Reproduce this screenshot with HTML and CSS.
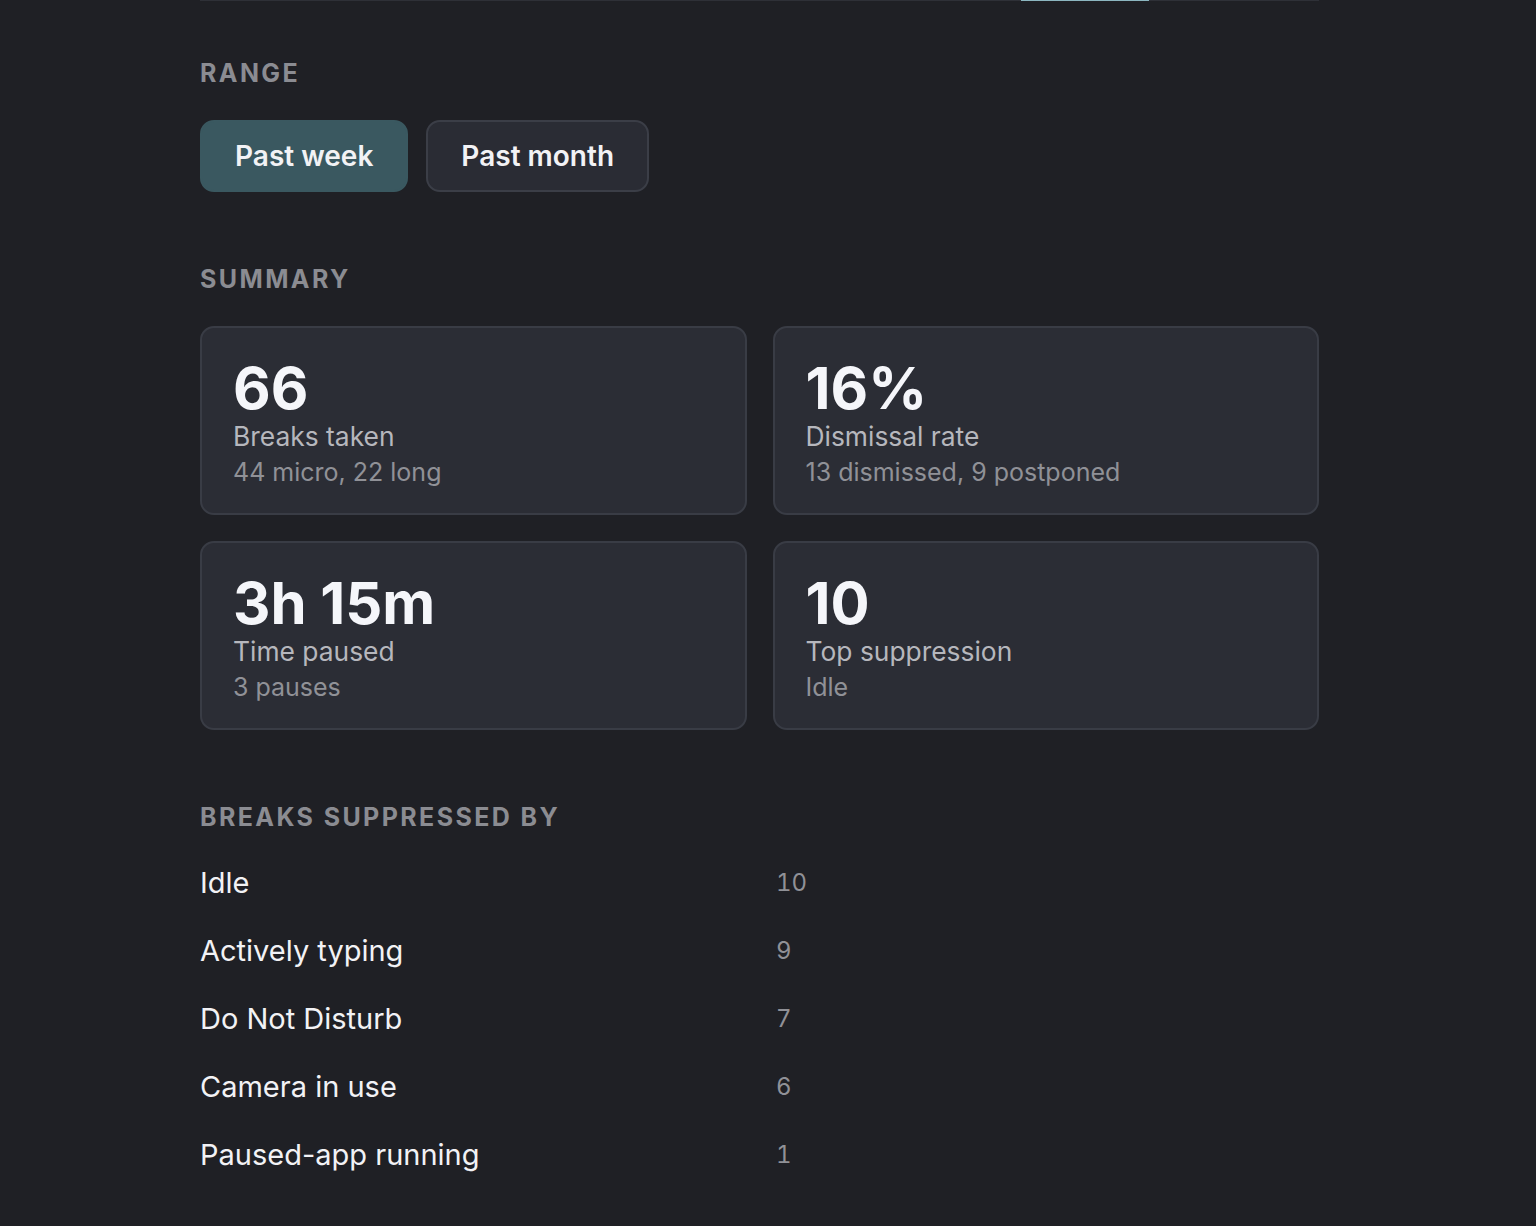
FILE: index.html
```html
<!DOCTYPE html>
<html lang="en">
<head>
<meta charset="utf-8">
<title>Stats</title>
<link rel="stylesheet" href="styles.css">
</head>
<body>
<div class="page">
  <div class="tabline"><div class="tab-spacer"></div><div class="tab-indicator"></div></div>

  <section class="section range">
    <h2 class="label">Range</h2>
    <div class="seg">
      <button class="btn active">Past week</button>
      <button class="btn">Past month</button>
    </div>
  </section>

  <section class="section summary">
    <h2 class="label">Summary</h2>
    <div class="cards">
      <div class="card">
        <div class="big">66</div>
        <div class="title">Breaks taken</div>
        <div class="sub">44 micro, 22 long</div>
      </div>
      <div class="card">
        <div class="big">16%</div>
        <div class="title">Dismissal rate</div>
        <div class="sub">13 dismissed, 9 postponed</div>
      </div>
      <div class="card">
        <div class="big">3h 15m</div>
        <div class="title">Time paused</div>
        <div class="sub">3 pauses</div>
      </div>
      <div class="card">
        <div class="big">10</div>
        <div class="title">Top suppression</div>
        <div class="sub">Idle</div>
      </div>
    </div>
  </section>

  <section class="section suppressed">
    <h2 class="label">Breaks suppressed by</h2>
    <div class="list">
      <div class="row"><span class="name">Idle</span><span class="count">10</span></div>
      <div class="row"><span class="name">Actively typing</span><span class="count">9</span></div>
      <div class="row"><span class="name">Do Not Disturb</span><span class="count">7</span></div>
      <div class="row"><span class="name">Camera in use</span><span class="count">6</span></div>
      <div class="row"><span class="name">Paused-app running</span><span class="count">1</span></div>
    </div>
  </section>
</div>
</body>
</html>
```

FILE: styles.css
```css
* { box-sizing: border-box; }
html, body {
  margin: 0;
  padding: 0;
  background: #1f2025;
}
body {
  font-family: Inter, "Noto Sans", "Liberation Sans", sans-serif;
  color: #f2f2f5;
}
.page {
  margin-left: 200px;
  width: 1119px;
}
.tabline {
  display: flex;
  height: 1px;
  background: #2e3037;
}
.tab-spacer { width: 821px; }
.tab-indicator {
  width: 128px;
  background: #8cb6c0;
}
.label {
  margin: 0;
  font-size: 25px;
  font-weight: 700;
  letter-spacing: 2.4px;
  text-transform: uppercase;
  color: #8b8c92;
  line-height: 30px;
}
.range { padding-top: 57px; }
.seg {
  display: flex;
  gap: 18px;
  margin-top: 32px;
}
.btn {
  font-family: inherit;
  font-size: 28px;
  font-weight: 600;
  height: 72px;
  padding: 0 33px;
  border-radius: 14px;
  border: 2px solid #3b3e47;
  background: #2a2c34;
  color: #f2f2f5;
  cursor: pointer;
}
.btn.active {
  background: #3a5860;
  border-color: #3a5860;
}
.summary { padding-top: 72px; }
.cards {
  display: grid;
  grid-template-columns: 1fr 1fr;
  gap: 26px;
  margin-top: 32px;
}
.card {
  background: #2b2d35;
  border: 2px solid #393c45;
  border-radius: 14px;
  height: 189px;
  padding: 30px 31px 0;
}
.big {
  font-size: 58px;
  font-weight: 700;
  line-height: 60px;
  color: #f5f6fa;
}
.title {
  font-size: 26.4px;
  line-height: 36px;
  color: #b6b7bd;
}
.sub {
  font-size: 25px;
  line-height: 36px;
  color: #909197;
}
.suppressed { padding-top: 72px; }
.list {
  margin-top: 16px;
}
.row {
  display: grid;
  grid-template-columns: 576px auto;
  align-items: center;
  height: 68px;
}
.name {
  font-size: 29px;
  color: #f2f2f5;
}
.count {
  font-size: 24px;
  font-variant-numeric: tabular-nums;
  color: #909197;
}
```
